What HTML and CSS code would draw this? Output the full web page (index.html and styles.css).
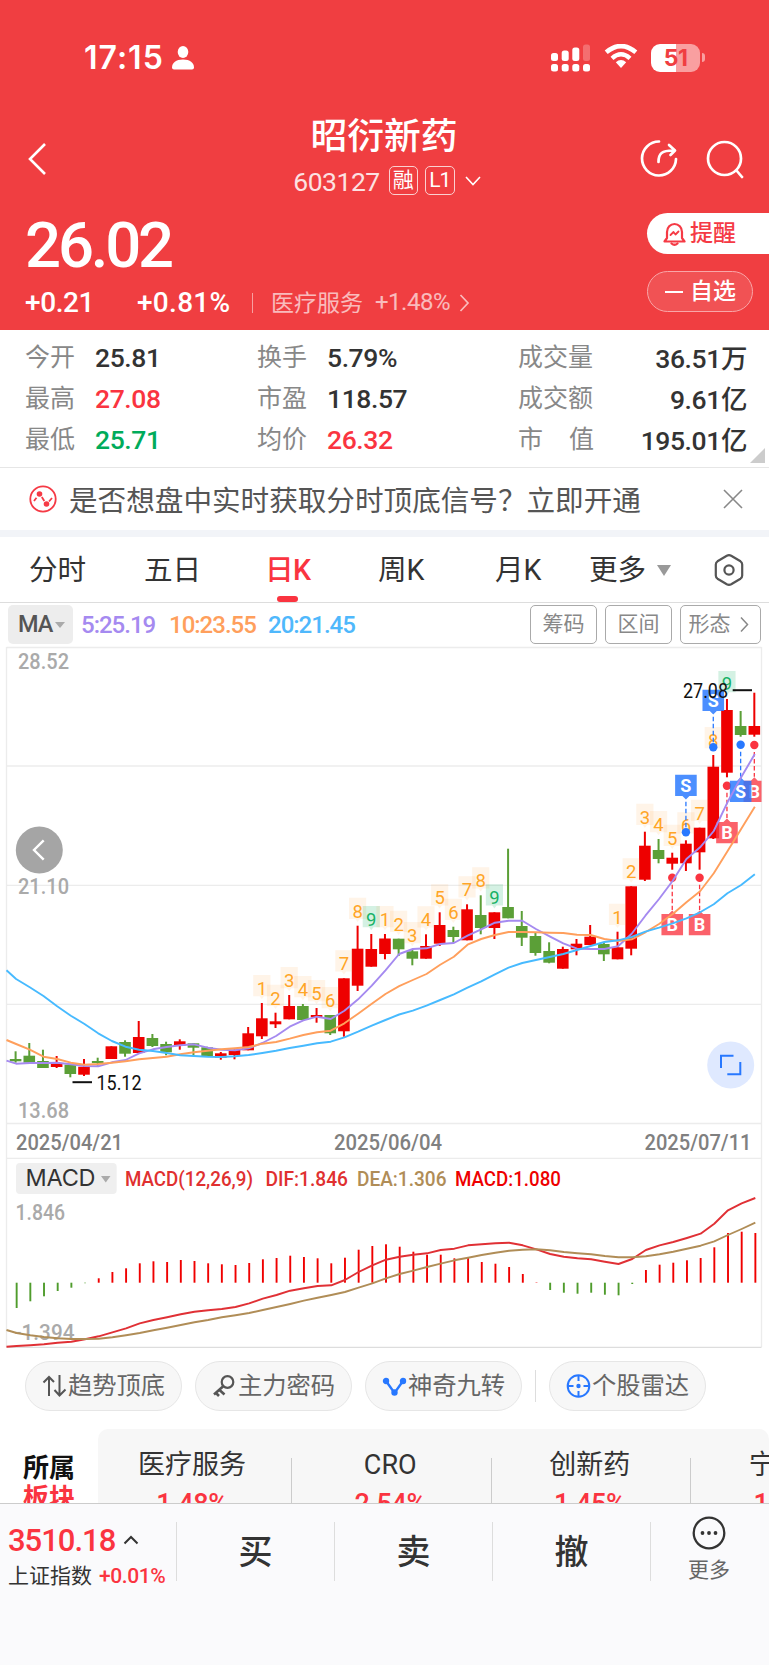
FILE: index.html
```html
<!DOCTYPE html>
<html lang="zh-CN">
<head>
    <meta charset="UTF-8">
    <meta name="viewport" content="width=device-width, initial-scale=1.0">
    <title>昭衍新药 603127</title>
    <link rel="stylesheet" href="styles.css">
</head>
<body>
    <header class="header">
        <div class="status-bar">
            <span class="time">17:15</span>
            <svg class="person" width="22" height="24" viewBox="0 0 22 24" fill="#fff">
                <ellipse cx="11" cy="6" rx="5.3" ry="6"/>
                <path d="M0 21.5C0 17 4 13.5 11 13.5S22 17 22 21.5Q22 23.5 20 23.5H2Q0 23.5 0 21.5Z"/>
            </svg>
            <svg class="signal" width="39" height="28" viewBox="0 0 39 28" fill="#fff">
                <rect x="0" y="9" width="7" height="8" rx="2.5"/>
                <rect x="10.7" y="6.5" width="7" height="10.5" rx="2.5"/>
                <rect x="21.3" y="3.5" width="7" height="13.5" rx="2.5"/>
                <rect x="32" y="0.5" width="7" height="16.5" rx="2.5" opacity=".25"/>
                <rect x="0" y="20" width="7" height="7.5" rx="2.5"/>
                <rect x="10.7" y="20" width="7" height="7.5" rx="2.5"/>
                <rect x="21.3" y="20" width="7" height="7.5" rx="2.5"/>
                <rect x="32" y="20" width="7" height="7.5" rx="2.5"/>
            </svg>
            <svg class="wifi" width="34" height="25" viewBox="0 0 34 25">
                <path d="M2.2 8.3Q17-4.2 31.8 8.3" fill="none" stroke="#fff" stroke-width="4.6"/>
                <path d="M8 14.3Q17 6.3 26 14.3" fill="none" stroke="#fff" stroke-width="4.4"/>
                <path d="M11.8 18.3Q17 13.7 22.2 18.3L17 24Z" fill="#fff"/>
            </svg>
            <div class="battery"><span>51</span></div>
            <i class="battery-tip"></i>
        </div>

        <div class="nav">
            <svg class="back" width="20" height="34" viewBox="0 0 20 34" fill="none" stroke="#fff" stroke-width="2.6">
                <path d="M18 2L3 17L18 32"/>
            </svg>
            <div class="title-box">
                <h1>昭衍新药</h1>
                <div class="code-row">
                    <span class="code">603127</span>
                    <span class="badge">融</span>
                    <span class="badge badge-l1">L1</span>
                    <svg width="16" height="10" viewBox="0 0 16 10" fill="none" stroke="#fff" stroke-width="1.6"><path d="M1 1L8 8.5L15 1"/></svg>
                </div>
            </div>
            <div class="nav-icons">
                <svg width="38" height="40" viewBox="0 0 38 40" fill="none" stroke="#fff" stroke-width="2.7" stroke-linecap="round" stroke-linejoin="round">
                    <path d="M19 2.5A17 17 0 1 0 36 20"/>
                    <path d="M18.500 23C18.500 14.500 22 11.500 33 11.500M29 6L35 11.500L30.500 16"/>
                </svg>
                <svg width="38" height="40" viewBox="0 0 38 40" fill="none" stroke="#fff" stroke-width="2.7" stroke-linecap="round">
                    <circle cx="18.500" cy="19.500" r="16.500"/>
                    <path d="M30.500 31.500L36 38"/>
                </svg>
            </div>
        </div>

        <div class="quote">
            <div class="quote-left">
                <div class="price">26.02</div>
                <div class="change-row">
                    <span class="change">+0.21</span>
                    <span class="percent">+0.81%</span>
                    <i class="sep"></i>
                    <span class="industry">医疗服务</span>
                    <span class="industry-pct">+1.48%</span>
                    <svg width="11" height="18" viewBox="0 0 11 18" fill="none" stroke="#fff" stroke-opacity=".65" stroke-width="1.7"><path d="M1.500 1L9 9L1.500 17"/></svg>
                </div>
            </div>
            <div class="quote-actions">
                <div class="btn-remind">
                    <svg width="23" height="24" viewBox="0 0 23 24" fill="none" stroke="#f53a45" stroke-width="2.2" stroke-linejoin="round" stroke-linecap="round">
                        <path d="M4 16V10A7.500 8 0 0 1 19 10V16L21.500 19.500H1.500Z"/>
                        <path d="M8.500 21.500Q11.500 24 14.500 21.500"/>
                        <path d="M7.500 13L10.500 10L12.500 12.500L15.500 9.500" stroke-width="1.800"/>
                    </svg>
                    <span>提醒</span>
                </div>
                <div class="btn-fav"><i></i><span>自选</span></div>
            </div>
        </div>
    </header>

    <section class="stats">
        <span class="label">今开</span><span class="value">25.81</span>
        <span class="label">换手</span><span class="value">5.79%</span>
        <span class="label">成交量</span><span class="value right">36.51万</span>
        <span class="label">最高</span><span class="value red">27.08</span>
        <span class="label">市盈</span><span class="value">118.57</span>
        <span class="label">成交额</span><span class="value right">9.61亿</span>
        <span class="label">最低</span><span class="value green">25.71</span>
        <span class="label">均价</span><span class="value red">26.32</span>
        <span class="label spread"><b>市</b><b>值</b></span><span class="value right">195.01亿</span>
        <i class="corner"></i>
    </section>

    <section class="notice">
        <svg width="28" height="28" viewBox="0 0 28 28" fill="none" stroke="#f53a45">
            <circle cx="14" cy="14" r="12.700" stroke-width="1.800"/>
            <path d="M5 16L7.500 12.700M12.800 12L15.300 16M20 16.500L23 13" stroke-width="1.800"/>
            <circle cx="10.500" cy="9" r="2.800" fill="#f53a45" stroke="none"/>
            <circle cx="17.500" cy="19" r="2.800" fill="#f53a45" stroke="none"/>
        </svg>
        <span class="notice-text">是否想盘中实时获取分时顶底信号？立即开通</span>
        <svg class="close" width="20" height="20" viewBox="0 0 20 20" stroke="#888" stroke-width="1.600"><path d="M1 1L19 19M19 1L1 19"/></svg>
    </section>

    <nav class="tabs">
        <span>分时</span>
        <span>五日</span>
        <span class="active">日K</span>
        <span>周K</span>
        <span>月K</span>
        <span class="more">更多<i></i></span>
        <svg width="30" height="32" viewBox="0 0 30 32" fill="none" stroke="#555" stroke-width="2.200" stroke-linejoin="round">
            <path d="M12.800 1.800Q15 .6 17.200 1.800L26.500 7.300Q28.200 8.400 28.200 10.500V21.500Q28.200 23.600 26.500 24.700L17.200 30.200Q15 31.400 12.800 30.200L3.500 24.700Q1.800 23.600 1.800 21.500V10.500Q1.800 8.400 3.500 7.300Z"/>
            <circle cx="15" cy="16" r="4.600"/>
        </svg>
    </nav>

    <section class="ma-row">
        <div class="ma-chip">MA<i></i></div>
        <span class="ma5">5:25.19</span>
        <span class="ma10">10:23.55</span>
        <span class="ma20">20:21.45</span>
        <div class="ma-buttons">
            <span>筹码</span>
            <span>区间</span>
            <span class="wide">形态<svg width="9" height="17" viewBox="0 0 9 17" fill="none" stroke="#888" stroke-width="1.500"><path d="M1 1.500L7.500 8.500L1 15.500"/></svg></span>
        </div>
    </section>

    <svg class="chart" id="chart" width="769" height="705" viewBox="0 645 769 705"></svg>

    <section class="tools">
        <div class="tool">
            <svg width="25" height="24" viewBox="0 0 25 24" fill="none" stroke="#555" stroke-width="2"><path d="M7 22V3M1.500 8.500L7 3L12 8M17.500 1V21M12.500 16L17.500 21.500L23.500 15.500"/></svg>
            <span>趋势顶底</span>
        </div>
        <div class="tool">
            <svg width="25" height="24" viewBox="0 0 25 24" fill="none" stroke="#555" stroke-width="2.200"><circle cx="15.500" cy="8" r="5.800"/><path d="M11.500 12L2 20.500M7.500 16L12.500 20.500M4 19L7 22" stroke-width="2.600"/></svg>
            <span>主力密码</span>
        </div>
        <div class="tool">
            <svg width="25" height="24" viewBox="0 0 25 24" fill="#2878ff" stroke="#2878ff" stroke-width="2.400"><path d="M4 7L12.500 19L21 7" fill="none"/><circle cx="4" cy="7" r="2"/><circle cx="12.500" cy="18.500" r="2"/><circle cx="21" cy="7" r="2"/></svg>
            <span>神奇九转</span>
        </div>
        <i class="tool-sep"></i>
        <div class="tool">
            <svg width="25" height="24" viewBox="0 0 25 24" fill="none" stroke="#2878ff" stroke-width="2"><circle cx="12.500" cy="12" r="10.800"/><path d="M12.500 1V7M12.500 17V23M1.500 12H7.500M17.500 12H23.500"/><circle cx="12.500" cy="12" r="1.200" fill="#2878ff"/></svg>
            <span>个股雷达</span>
        </div>
    </section>

    <section class="sectors">
        <div class="sector-title"><span>所属</span><span class="red">板块</span></div>
        <div class="sector-list">
            <div class="sector"><span>医疗服务</span><b>1.48%</b></div>
            <div class="sector"><span>CRO</span><b>2.54%</b></div>
            <div class="sector"><span>创新药</span><b>1.45%</b></div>
            <div class="sector"><span>宁组合</span><b>1.17%</b></div>
        </div>
    </section>

    <footer class="bottom-bar">
        <div class="index-box">
            <div class="index-value">3510.18<svg width="16" height="10" viewBox="0 0 16 10" fill="none" stroke="#333" stroke-width="2"><path d="M1.500 8.500L8 2L14.500 8.500"/></svg></div>
            <div class="index-name">上证指数<span>+0.01%</span></div>
        </div>
        <div class="trade">买</div>
        <div class="trade">卖</div>
        <div class="trade">撤</div>
        <div class="more-box">
            <svg width="34" height="34" viewBox="0 0 34 34" fill="none" stroke="#333" stroke-width="2.300">
                <circle cx="17" cy="17" r="15.300"/>
                <g fill="#333" stroke="none"><circle cx="10.500" cy="17" r="1.900"/><circle cx="17" cy="17" r="1.900"/><circle cx="23.500" cy="17" r="1.900"/></g>
            </svg>
            <span>更多</span>
        </div>
    </footer>

    <script src="chart.js"></script>
</body>
</html>
```

FILE: styles.css
```css
* {
    box-sizing: border-box;
}

body {
    margin: 0;
    width: 769px;
    height: 1665px;
    overflow: hidden;
    background-color: #fff;
    color: #333;
    font-family: Roboto, "Noto Sans CJK SC", sans-serif;
    display: flex;
    flex-direction: column;
}

body > * {
    flex-shrink: 0;
}

svg {
    display: block;
    flex-shrink: 0;
}

i {
    display: block;
    flex-shrink: 0;
}

span {
    white-space: nowrap;
}

.red {
    color: #fa3440 !important;
}

.green {
    color: #00ab5b !important;
}

/* header */
.header {
    height: 330px;
    background-color: #f03e41;
    color: #fff;
}

.status-bar {
    height: 115px;
    padding: 0 64px 0 84px;
    display: flex;
    align-items: center;
}

.time {
    width: 88px;
    font-family: Inter, sans-serif;
    font-weight: 600;
    font-size: 32px;
    letter-spacing: 1px;
}

.signal {
    margin-left: auto;
}

.wifi {
    margin: 0 13px 2px 14px;
}

.battery {
    width: 49px;
    height: 28px;
    border-radius: 9px;
    background: linear-gradient(90deg, #fff 51%, #f99fa0 51%);
    color: #f03e41;
    font-family: Inter, sans-serif;
    font-weight: 700;
    font-size: 23px;
    line-height: 28px;
    text-align: center;
    letter-spacing: -0.5px;
}

.battery-tip {
    width: 3px;
    height: 9px;
    margin-left: 2px;
    border-radius: 0 4px 4px 0;
    background-color: #f99fa0;
}

.nav {
    height: 90px;
    padding: 0 25px 0 27px;
    display: flex;
    justify-content: space-between;
}

.back {
    margin-top: 27px;
}

.title-box {
    margin-left: 81px;
    display: flex;
    flex-direction: column;
    align-items: center;
}

h1 {
    margin: 1px 0 0;
    font-weight: 500;
    font-size: 36.8px;
    line-height: 42px;
}

.code-row {
    margin-top: 7px;
    height: 31px;
    display: flex;
    align-items: center;
}

.code {
    margin: 1px 9px 0 6px;
    font-size: 26.5px;
    letter-spacing: -0.5px;
    opacity: 0.85;
}

.badge {
    width: 29px;
    height: 29px;
    margin-right: 7px;
    border: 1.3px solid #fbd0d0;
    border-radius: 5px;
    font-size: 21px;
    line-height: 26px;
    text-align: center;
}

.badge-l1 {
    width: 30px;
    margin-right: 10px;
    letter-spacing: -1px;
}

.nav-icons {
    padding-top: 24px;
    display: flex;
    gap: 28px;
}

.quote {
    height: 125px;
    display: flex;
    justify-content: space-between;
}

.quote-left {
    padding-left: 25px;
}

.price {
    height: 78px;
    margin-top: 1px;
    font-weight: 500;
    font-size: 63.5px;
    line-height: 79px;
    letter-spacing: -3.2px;
}

.change-row {
    height: 40px;
    padding-bottom: 3px;
    display: flex;
    align-items: center;
    font-weight: 500;
    font-size: 28px;
}

.change {
    width: 112px;
    letter-spacing: -0.4px;
}

.percent {
    width: 115px;
    letter-spacing: 0.3px;
}

.sep {
    width: 1px;
    height: 20px;
    margin-right: 18px;
    background-color: rgba(255, 255, 255, 0.5);
}

.industry {
    width: 104px;
    margin-top: -4px;
    font-weight: 400;
    font-size: 23px;
    opacity: 0.65;
}

.industry-pct {
    width: 84px;
    margin-top: -2px;
    font-weight: 400;
    font-size: 24px;
    letter-spacing: -0.5px;
    opacity: 0.65;
}

.quote-actions {
    width: 122px;
    padding-top: 8px;
    font-weight: 500;
    font-size: 23px;
    line-height: 36px;
}

.btn-remind {
    height: 41px;
    padding-left: 16px;
    border-radius: 21px 0 0 21px;
    background-color: #fff;
    color: #f53a45;
    display: flex;
    align-items: center;
    gap: 4px;
}

.btn-fav {
    width: 106px;
    height: 41px;
    margin-top: 17px;
    padding-left: 17px;
    border: 1.3px solid #f9a6a8;
    border-radius: 21px;
    background-color: #f15254;
    display: flex;
    align-items: center;
    gap: 7px;
}

.btn-fav i {
    width: 18px;
    height: 2px;
    background-color: #fff;
}

/* price stats */
.stats {
    position: relative;
    height: 138px;
    padding: 7px 22px 0 25px;
    border-bottom: 1px solid #e6e6e6;
    display: grid;
    grid-template-columns: 70px 162px 70px 191px 76px 1fr;
    grid-auto-rows: 41px;
    align-items: center;
}

.label {
    padding-bottom: 5px;
    color: #888;
    font-size: 25px;
}

.spread {
    display: flex;
    justify-content: space-between;
}

.spread b {
    font-weight: 400;
}

.value {
    font-weight: 500;
    font-size: 26.5px;
    letter-spacing: -0.4px;
}

.right {
    padding-bottom: 2px;
    text-align: right;
}

.corner {
    position: absolute;
    right: 4px;
    bottom: 4px;
    border-left: 15px solid transparent;
    border-bottom: 15px solid #ccc;
}

/* notice */
.notice {
    height: 69px;
    padding: 0 26px 0 29px;
    border-bottom: 7px solid #f2f4f8;
    display: flex;
    align-items: center;
}

.notice-text {
    margin: -2px 0 0 12px;
    font-size: 28.6px;
    color: #555;
}

.close {
    margin-left: auto;
}

/* period tabs */
.tabs {
    height: 66px;
    border-bottom: 1px solid #ddd;
    padding-left: 29px;
    display: grid;
    grid-template-columns: 115px 121px 113px 117px 94px 125px auto;
    align-items: center;
    justify-content: start;
    font-size: 28.6px;
    line-height: 65px;
}

.tabs span {
    height: 65px;
    padding-top: 1px;
}

.active {
    color: #fa3440;
    font-weight: 500;
    letter-spacing: -0.5px;
    position: relative;
}

.active::after {
    content: "";
    position: absolute;
    left: 12px;
    bottom: 0;
    width: 21px;
    height: 6px;
    border-radius: 3px;
    background-color: #fa3440;
}

.more {
    display: flex;
    align-items: center;
    gap: 11px;
}

.more i,
.ma-chip i {
    border: 7px solid transparent;
    border-top: 11px solid #999;
    border-bottom: 0;
}

/* moving averages */
.ma-row {
    height: 42px;
    padding: 2px 8px 0;
    display: flex;
    align-items: flex-start;
    font-weight: 500;
    font-size: 24px;
    line-height: 41px;
    letter-spacing: -1px;
}

.ma-chip {
    width: 65px;
    height: 39px;
    margin-right: 8px;
    padding-left: 10px;
    border-radius: 5px;
    background-color: #ededed;
    color: #555;
    display: flex;
    align-items: center;
    font-size: 23.5px;
}

.ma-chip i {
    margin-left: 3px;
    border-width: 6px 5px 0;
    border-top-color: #aaa;
}

.ma5 {
    width: 88px;
    color: #a58af0;
}

.ma10 {
    width: 99px;
    color: #ff9f5c;
}

.ma20 {
    color: #4fb8fc;
}

.ma-buttons {
    margin-left: auto;
    display: flex;
    gap: 8px;
}

.ma-buttons span {
    width: 67px;
    height: 39px;
    border: 1.3px solid #aaa;
    border-radius: 5px;
    display: flex;
    align-items: center;
    justify-content: center;
    font-weight: 400;
    font-size: 21px;
    letter-spacing: 0;
    color: #888;
}

.ma-buttons .wide {
    width: 81px;
    padding-right: 4px;
    gap: 9px;
}

/* chart */
.chart text {
    font-family: Roboto, sans-serif;
}

/* tool pills */
.tools {
    height: 79px;
    padding: 11px 25px 0;
    display: flex;
    gap: 13px;
}

.tool {
    width: 157px;
    height: 50px;
    border: 1px solid #e6e6e6;
    border-radius: 25px;
    background-color: #f7f7f7;
    display: flex;
    align-items: center;
    justify-content: center;
    gap: 1px;
    font-size: 24.3px;
    line-height: 46px;
    color: #666;
}

.tool-sep {
    width: 1px;
    height: 32px;
    margin-top: 9px;
    background-color: #ddd;
}

/* sectors */
.sectors {
    height: 74px;
    overflow: hidden;
    display: flex;
}

.sector-title {
    width: 98px;
    padding: 24px 0 0 23px;
    display: flex;
    flex-direction: column;
    flex-shrink: 0;
    font-weight: 700;
    font-size: 26px;
    line-height: 30px;
    color: #111;
}

.sector-list {
    width: 671px;
    height: 120px;
    overflow: hidden;
    border-radius: 10px;
    background-color: #f7f7f7;
    display: flex;
}

.sector {
    width: 199.5px;
    flex-shrink: 0;
    padding: 16px 3px 0 0;
    display: flex;
    flex-direction: column;
    align-items: center;
    font-size: 27px;
    line-height: 40px;
    background: linear-gradient(#ccc, #ccc) no-repeat right 29px / 1px 80px;
}

.sector:first-child {
    width: 194px;
    padding-right: 6px;
}

.sector b {
    margin-top: -1px;
    font-weight: 500;
    color: #fa3440;
    letter-spacing: -0.4px;
}

/* bottom bar */
.bottom-bar {
    flex-grow: 1;
    padding-top: 18px;
    border-top: 1px solid #ccc;
    background-color: #fafafc;
    display: flex;
    align-items: flex-start;
}

.index-box {
    width: 176px;
    height: 59px;
    padding-left: 8px;
}

.index-value {
    height: 36px;
    display: flex;
    align-items: center;
    gap: 8px;
    font-weight: 500;
    font-size: 31px;
    letter-spacing: -1px;
    color: #fa3440;
}

.index-name {
    display: flex;
    align-items: center;
    gap: 7px;
    font-size: 21px;
    line-height: 37px;
}

.index-name span {
    color: #fa3440;
    font-weight: 500;
    letter-spacing: -0.4px;
}

.trade {
    width: 158px;
    height: 59px;
    border-left: 1px solid #ddd;
    font-weight: 500;
    font-size: 34px;
    line-height: 60px;
    text-align: center;
}

.more-box {
    width: 117px;
    height: 59px;
    border-left: 1px solid #ddd;
    display: flex;
    flex-direction: column;
    align-items: center;
    font-size: 21px;
    line-height: 36px;
    color: #666;
}

.more-box svg {
    margin-top: -6px;
    margin-bottom: 2px;
}
```

FILE: chart.js
```javascript
const NS = 'http://www.w3.org/2000/svg';
const chart = document.getElementById('chart');

const STEP = 13.68;
const FIRST = 15.6;
const RED = '#ee0000';
const GREEN = '#5b9f37';

// [color, high, bodyTop, bodyBottom, low]
const candles = [
    ['g', 1051.3, 1059, 1061.3, 1062.7], ['g', 1043, 1055.7, 1062.7, 1062.7], ['g', 1049.7, 1061, 1068, 1068],
    ['r', 1056, 1063.7, 1067, 1068], ['g', 1063.7, 1064.7, 1074, 1077.3], ['r', 1059, 1066.7, 1074.7, 1076],
    ['g', 1057.7, 1061, 1063, 1065.7], ['r', 1046.3, 1046.3, 1059, 1059], ['g', 1040.3, 1042, 1053.7, 1056.7],
    ['r', 1021, 1037, 1053, 1053], ['g', 1034, 1038, 1046, 1047], ['g', 1041.7, 1044, 1052.3, 1055.3],
    ['r', 1039.3, 1041.3, 1045.7, 1049.7], ['g', 1043, 1043.3, 1047.7, 1055.3], ['g', 1046.7, 1047.3, 1056, 1056],
    ['r', 1052, 1053.3, 1057.7, 1059.7], ['r', 1049.3, 1050, 1055, 1059.3], ['r', 1027, 1033.3, 1050.3, 1050.3],
    ['r', 1003, 1018.3, 1036.3, 1039], ['r', 1012.7, 1021.3, 1024.3, 1028], ['r', 995, 1006, 1019.3, 1019.3],
    ['g', 1004, 1006, 1020, 1020], ['r', 1008, 1015, 1017.3, 1022.7], ['g', 1015, 1015, 1033.3, 1035],
    ['r', 978.3, 978.3, 1031.3, 1036.7], ['r', 925.7, 948.7, 985.7, 991], ['r', 934, 949, 966.7, 966.7],
    ['r', 934, 938.5, 954, 959.3], ['g', 938.7, 938.7, 949.3, 956], ['g', 950, 951.3, 958.7, 965.3],
    ['r', 934.3, 946, 958.7, 958.7], ['r', 912.3, 925, 943.7, 946], ['g', 926.7, 930, 937, 942.7],
    ['r', 904.3, 909.3, 940.3, 940.3], ['g', 895.3, 915, 928, 934.3], ['r', 912.3, 912.3, 928, 939],
    ['g', 848.7, 907, 918.3, 918.3], ['g', 911, 926, 937.7, 946], ['g', 932.7, 936, 953, 955.7],
    ['g', 942.3, 951, 962.7, 963.3], ['r', 946.7, 949, 968.7, 968.7], ['r', 939, 943.7, 949.3, 955.3],
    ['r', 925, 936.7, 945, 945], ['g', 942, 944, 954.3, 961], ['r', 931.7, 947.3, 959.3, 959.3],
    ['r', 886.3, 886.3, 948.7, 955.3], ['r', 831.7, 845.7, 879.7, 881], ['g', 839, 850, 859, 863.3],
    ['r', 852.7, 857.7, 863.7, 869.7], ['r', 840.3, 843.7, 863.3, 871], ['r', 827.7, 827.7, 852.3, 869.7],
    ['r', 755, 766.7, 838.3, 839], ['r', 699, 710, 772.7, 777.3], ['g', 711, 726, 735, 736.7],
    ['r', 692.7, 726, 734.7, 736.7]
];

// first value of every line sits on the left frame
const ma5 = [1060.7, 1063.7, 1063, 1063, 1062.7, 1064.3, 1066, 1066.3, 1062.3, 1060, 1053.3, 1049.3, 1047, 1045.3, 1044.3,
    1047.7, 1049.7, 1050.3, 1048.3, 1043, 1036, 1026.7, 1020.3, 1016.7, 1019, 1010.7, 999.3, 985.7, 970.3, 954,
    949, 948.3, 944, 943, 935.7, 929.3, 922.7, 920.7, 920.7, 929, 936.3, 943.3, 948.7, 949, 949, 946.3, 933.7,
    915.7, 899, 880.7, 859, 847.3, 831, 802.3, 777.3, 754];
const ma10 = [1040, 1044, 1049.7, 1056.7, 1059, 1062.7, 1064.7, 1064, 1062.7, 1061.3, 1059.3, 1058, 1056.7, 1054.3, 1052.3,
    1050.7, 1049.3, 1048.3, 1047, 1043.7, 1042, 1038.7, 1035, 1032.3, 1030.7, 1023.3, 1013.7, 1003.7, 994, 986.2,
    980, 974, 964.7, 956.7, 944.7, 939, 935, 932, 932, 932.3, 932.7, 933, 934.7, 935, 939, 941, 939.3,
    932.3, 924, 914, 902.3, 891.3, 873.3, 851.3, 829, 806.7];
const ma20 = [970.3, 979, 987.3, 996, 1006.3, 1015.7, 1024, 1033.3, 1041, 1046.7, 1049.7, 1051, 1053, 1055.3, 1056,
    1056.7, 1057, 1056.3, 1055, 1053, 1050.7, 1048, 1045.7, 1043.3, 1041.7, 1037.3, 1031.7, 1025.7, 1020, 1014.5,
    1010.7, 1005.7, 1000, 994.3, 987.7, 981.3, 974.3, 967.7, 963, 960, 957, 954, 950, 946, 942, 940.3, 937,
    931.7, 927.7, 923.3, 918.3, 912.3, 904.3, 893.3, 885, 874.3];
const dif = [1346.7, 1346, 1345.3, 1344.3, 1342.7, 1341.7, 1339.3, 1336.3, 1332.3, 1328.3, 1323.3, 1320, 1317.3, 1314.3, 1311.7,
    1310.3, 1309, 1307, 1303.3, 1298.7, 1295, 1290.7, 1288.3, 1286, 1285.3, 1280, 1272, 1265.3, 1259.7, 1256.7,
    1254.7, 1253.3, 1250, 1248.7, 1245.3, 1244.3, 1243.3, 1242.7, 1245.3, 1249.3, 1254, 1256.7, 1258.3, 1259.3, 1261.7,
    1264, 1259, 1250, 1245.3, 1242, 1238, 1233.7, 1223.7, 1210.3, 1203.3, 1198];
const dea = [1330, 1333, 1335.3, 1337, 1338.3, 1339, 1339, 1338.7, 1337.3, 1335.3, 1333, 1330.3, 1327.7, 1325, 1322.3,
    1320, 1317.3, 1315.3, 1313, 1310, 1307, 1304, 1300.7, 1297.7, 1295, 1292, 1287.7, 1283.3, 1278.3, 1274,
    1270.7, 1267, 1263.7, 1260.3, 1257.7, 1255, 1252.7, 1250.7, 1249.7, 1249.3, 1250.3, 1252, 1253.3, 1254.3, 1256,
    1257.3, 1257.3, 1256.3, 1254.3, 1251.7, 1248.7, 1245.7, 1241.3, 1235, 1229, 1222.7];
const bars = [1308, 1301.3, 1296.3, 1291, 1287.7, 1283.2, 1278.3, 1272, 1268.3, 1263.3, 1261.3, 1262, 1260, 1261, 1263.3,
    1264.3, 1265, 1263, 1259.3, 1258, 1255.7, 1257, 1258.3, 1263.3, 1257.7, 1249.7, 1246, 1244.3, 1246.7, 1251.7,
    1254.7, 1254.7, 1258.3, 1257.3, 1262, 1263.7, 1267, 1274, 1282.3, 1290, 1292.7, 1293.7, 1292.7, 1294.7, 1295.3,
    1284, 1270, 1264.7, 1262.7, 1260.3, 1258, 1247.3, 1233, 1231.7, 1233];

// index of the first candle of each count
const counts = [18, 27, 44];

const signals = [
    { i: 49, type: 'S', box: 774.7, dot: 832.3 },
    { i: 51, type: 'S', box: 689.7, dot: 747.2 },
    { i: 48, type: 'B', box: 914, dot: 877.7 },
    { i: 50, type: 'B', box: 914, dot: 877.7 },
    { i: 52, type: 'B', box: 822, dot: 785.7 },
    { i: 54, type: 'B', box: 780.7, dot: 745 },
    { i: 53, type: 'S', box: 780.7, dot: 744.7 }
];

function add(tag, attrs, text) {
    const el = document.createElementNS(NS, tag);
    for (const key in attrs) {
        el.setAttribute(key, attrs[key]);
    }
    if (text) {
        el.textContent = text;
    }
    chart.appendChild(el);
    return el;
}

function label(text, x, y, width, size, color, weight) {
    add('text', {
        x: x, y: y, 'font-size': size, fill: color, 'font-weight': weight || 400,
        textLength: width, lengthAdjust: 'spacingAndGlyphs'
    }, text);
}

function hLine(y, color) {
    add('path', { d: 'M6.5 ' + y + 'H761.5', stroke: color || '#ececec', 'stroke-width': 1.3 });
}

function polyline(values, color, offset) {
    const points = values.map((y, n) => (n === 0 ? 6.5 : FIRST + offset + (n - 1) * STEP) + ',' + y);
    add('polyline', { points: points.join(' '), fill: 'none', stroke: color, 'stroke-width': 1.9, 'stroke-linejoin': 'round' });
}

// frame
[647.5, 766, 885.3, 1004.4, 1123.5, 1158.3].forEach(y => hLine(y));
add('path', { d: 'M6.5 647V1347M761.5 647V1347', stroke: '#ececec', 'stroke-width': 1.3 });
hLine(1347.3, '#ddd');

// axis labels
label('28.52', 18, 669.2, 51, 22, '#aaa', 500);
label('21.10', 18, 894, 51, 22, '#aaa', 500);
label('13.68', 18, 1118.2, 51, 22, '#aaa', 500);
label('2025/04/21', 16, 1149.7, 107, 22.5, '#808080', 500);
label('2025/06/04', 334, 1149.7, 108, 22.5, '#808080', 500);
label('2025/07/11', 644.5, 1149.7, 107, 22.5, '#808080', 500);

// candles
candles.forEach((c, i) => {
    const x = FIRST + i * STEP;
    const color = c[0] === 'r' ? RED : GREEN;
    add('rect', { x: x - 1, y: c[1], width: 2, height: c[4] - c[1], fill: color });
    add('rect', { x: x - 5.8, y: c[2], width: 11.6, height: c[3] - c[2], fill: color });
});

// count tags above the highs, every run ends with a green 9
counts.forEach(start => {
    for (let n = 1; n <= 9; n++) {
        const i = start + n - 1;
        const x = FIRST + i * STEP;
        const top = candles[i][1] - 28;
        const nine = n === 9;
        add('path', {
            d: `M${x - 8.6} ${top}h17.2v21.300h-6.400l-2.200 3l-2.200-3h-6.400z`,
            fill: nine ? '#00ab5b' : '#ff9b2e', 'fill-opacity': nine ? 0.17 : 0.11
        });
        add('text', {
            x: x, y: top + (i === 52 ? 18.5 : 20), 'font-size': 18.5, 'text-anchor': 'middle', fill: nine ? '#18b166' : '#ffa526'
        }, String(n));
    }
});

// buy and sell signals
const clip = add('clipPath', { id: 'frame' });
const clipRect = add('rect', { x: 6, y: 645, width: 755.5, height: 480 });
clip.appendChild(clipRect);

signals.forEach(s => {
    const x = FIRST + s.i * STEP;
    const sell = s.type === 'S';
    const color = sell ? '#2878ff' : '#fa3440';
    const up = s.box < s.dot;
    const lineFrom = up ? s.box + 27 : s.dot + 7;
    const lineTo = up ? s.dot - 3 : s.box - 4;
    add('path', { d: `M${x} ${lineFrom}V${lineTo}`, stroke: color, 'stroke-width': 1.3, 'stroke-dasharray': '4.500 2.500' });
    add('circle', { cx: x, cy: s.dot, r: 4.2, fill: color });
    const arrow = up
        ? `M${x - 3.5} ${s.box + 21.3}l3.500 3.500l3.500-3.500z`
        : `M${x - 3.5} ${s.box}l3.500-3.500l3.500 3.500z`;
    add('path', {
        d: `M${x - 10.8} ${s.box}h21.600v21.300h-21.600z` + arrow,
        fill: color, 'fill-opacity': sell ? 0.83 : 0.78, 'clip-path': 'url(#frame)'
    });
    add('text', {
        x: x, y: s.box + 17.3, 'font-size': 18, 'font-weight': 700, 'text-anchor': 'middle', fill: '#fff', 'clip-path': 'url(#frame)'
    }, s.type);
});

polyline(ma5, '#a58af0', 0.5);
polyline(ma10, '#ff9f5c', 0.5);
polyline(ma20, '#47baff', 0.5);

// highest and lowest price
label('27.08', 683, 698.2, 45, 19.5, '#111');
add('path', { d: 'M732.7 690.2H752', stroke: '#111', 'stroke-width': 2 });
label('15.12', 96.5, 1090, 45, 19.5, '#111');
add('path', { d: 'M72.500 1082.200H92', stroke: '#111', 'stroke-width': 2 });

// round buttons
add('circle', { cx: 39.3, cy: 850, r: 23.5, fill: '#a5a5a5' });
add('path', { d: 'M43.700 840.300L34 850L43.700 859.700', fill: 'none', stroke: '#fff', 'stroke-width': 2.4 });
add('circle', { cx: 730.7, cy: 1065, r: 23.5, fill: '#dfe9ff' });
add('path', { d: 'M733.500 1055.700H721V1068M727.300 1074.300H740.300V1062', fill: 'none', stroke: '#2878ff', 'stroke-width': 2 });

// MACD
add('rect', { x: 16, y: 1163, width: 100.7, height: 31, rx: 4, fill: '#efefef' });
add('text', {
    x: 25.5, y: 1185.5, 'font-size': 23.5, fill: '#333', textLength: 70, style: 'font-family: Inter, sans-serif'
}, 'MACD');
add('path', { d: 'M101 1176h9.500l-4.750 6.500z', fill: '#aaa' });
label('MACD(12,26,9)', 125, 1186, 128, 19.5, '#e03030', 500);
label('DIF:1.846', 265.5, 1186, 82.5, 19.5, '#e03030', 500);
label('DEA:1.306', 357, 1186, 89.5, 19.5, '#b08d57', 500);
label('MACD:1.080', 455, 1186, 106, 19.5, '#ee0000', 500);
label('1.846', 15.5, 1219.8, 49.5, 21.5, '#aaa', 500);
label('-1.394', 14.5, 1340.2, 60, 21.5, '#aaa', 500);

bars.forEach((y, i) => {
    const top = Math.min(y, 1282.7);
    const red = y < 1282.7;
    add('rect', {
        x: FIRST + 0.1 + i * STEP, y: top, width: 1.9, height: Math.abs(y - 1282.7), fill: red ? '#f00000' : '#4f9c2c'
    });
});

polyline(dif, '#e03035', 1);
polyline(dea, '#b08d57', 1);
```
